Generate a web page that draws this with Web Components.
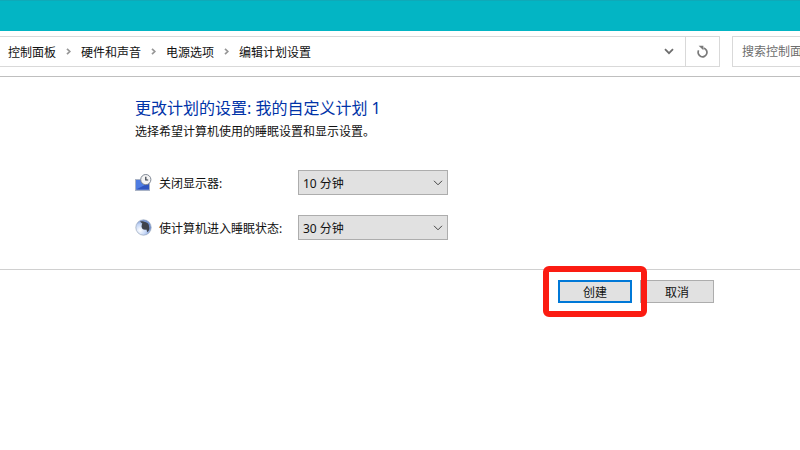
<!DOCTYPE html>
<html lang="zh-CN">
<head>
<meta charset="utf-8">
<title>编辑计划设置</title>
<style>
  html, body { margin: 0; padding: 0; background: #fff; }
  body {
    width: 800px;
    height: 450px;
    overflow: hidden;
    font-family: "Noto Sans", "Noto Sans CJK SC", sans-serif;
    color: #111;
  }
</style>
</head>
<body>
  <title-strip></title-strip>
  <address-bar>
    <crumb-item>控制面板</crumb-item>
    <crumb-item>硬件和声音</crumb-item>
    <crumb-item>电源选项</crumb-item>
    <crumb-item last>编辑计划设置</crumb-item>
  </address-bar>
  <plan-form>
    <span slot="title">更改计划的设置: 我的自定义计划 1</span>
    <span slot="hint">选择希望计算机使用的睡眠设置和显示设置。</span>
    <setting-row icon="monitor" value="10 分钟">关闭显示器:</setting-row>
    <setting-row icon="sleep" value="30 分钟">使计算机进入睡眠状态:</setting-row>
    <plan-button slot="buttons" primary marked>创建</plan-button>
    <plan-button slot="buttons">取消</plan-button>
  </plan-form>

<script>
class TitleStrip extends HTMLElement {
  constructor() {
    super();
    this.attachShadow({ mode: 'open' });
  }
  connectedCallback() {
    this.shadowRoot.innerHTML = `
      <style>
        :host {
          display: block;
          height: 31px;
          background: #03b5c4;
          border-top: 1px solid #0fa9b8;
          box-sizing: border-box;
        }
      </style>
    `;
  }
}

class CrumbItem extends HTMLElement {
  constructor() {
    super();
    this.attachShadow({ mode: 'open' });
  }
  connectedCallback() {
    const sep = this.hasAttribute('last') ? '' : `
      <svg width="5" height="7" viewBox="0 0 5 7"><path d="M1 .8 3.8 3.5 1 6.2" fill="none" stroke="#969696" stroke-width="1.7"/></svg>`;
    this.shadowRoot.innerHTML = `
      <style>
        :host { display: inline-flex; align-items: center; gap: 10px; font-size: 12px; color: #111; }
      </style>
      <slot></slot>${sep}
    `;
  }
}

class AddressBar extends HTMLElement {
  constructor() {
    super();
    this.attachShadow({ mode: 'open' });
  }
  connectedCallback() {
    this.shadowRoot.innerHTML = `
      <style>
        :host {
          display: flex;
          height: 46px;
          box-sizing: border-box;
          padding-top: 5px;
          border-bottom: 1px solid #bfbfbf;
        }
        .path {
          width: 720px;
          height: 31px;
          box-sizing: border-box;
          flex: none;
          display: flex;
          border: 1px solid #d9d9d9;
          border-left: 0;
        }
        .crumbs { flex: 1; display: flex; align-items: center; gap: 10px; padding-left: 8px; }
        .btn { display: flex; align-items: center; justify-content: center; }
        .drop { width: 32px; }
        .refresh { width: 33px; border-left: 1px solid #d9d9d9; }
        .search {
          margin-left: 12px;
          flex: 1;
          height: 31px;
          box-sizing: border-box;
          border: 1px solid #d9d9d9;
          border-right: 0;
          padding-left: 9px;
          font-size: 12px;
          line-height: 29px;
          color: #6d6d6d;
          white-space: nowrap;
          overflow: hidden;
        }
      </style>
      <div class="path">
        <div class="crumbs"><slot></slot></div>
        <div class="btn drop">
          <svg width="10" height="7" viewBox="0 0 10 7"><path d="M1 1.2 5 5.2 9 1.2" fill="none" stroke="#6e6e6e" stroke-width="1.8"/></svg>
        </div>
        <div class="btn refresh">
          <svg width="11" height="13" viewBox="0 0 11 13"><path d="M6.6 3.1A4.4 4.4 0 1 1 1.6 5.4" fill="none" stroke="#7a7a7a" stroke-width="1.7"/><path d="M1.6 .7H6.4V5.2Z" fill="#7a7a7a"/></svg>
        </div>
      </div>
      <div class="search">搜索控制面板</div>
    `;
  }
}

const ICONS = {
  monitor: `
    <svg width="17" height="17" viewBox="0 0 17 17">
      <rect x="0" y="5" width="15" height="12" fill="#a9b3c6"/>
      <rect x="1" y="6" width="13" height="9.5" fill="#4f7de2"/>
      <path d="M1 15.5 14 9V15.5Z" fill="#2f55c0"/>
      <circle cx="10.8" cy="5.6" r="5.1" fill="#f4f4f4" stroke="#7f8794"/>
      <path d="M10.8 2.8V6H13.2" fill="none" stroke="#333a46" stroke-width="1.2"/>
    </svg>`,
  sleep: `
    <svg width="17" height="17" viewBox="0 0 17 17">
      <defs>
        <radialGradient id="orb" cx="28%" cy="68%" r="70%">
          <stop offset="0" stop-color="#ffffff"/>
          <stop offset=".55" stop-color="#c4d6f6"/>
          <stop offset="1" stop-color="#6f8fd0"/>
        </radialGradient>
      </defs>
      <circle cx="8.5" cy="8.5" r="7.7" fill="url(#orb)" stroke="#9aa7bc" stroke-width=".7"/>
      <path d="M5 2.4C9 1.6 14.6 4 14.4 9.6 14.3 11.4 13.4 12.6 12.2 13.2 11.8 9.4 9.6 6 5 2.4Z" fill="#3f434b"/>
      <circle cx="10.2" cy="7.2" r="3.6" fill="#3f434b"/>
    </svg>`
};

class SettingRow extends HTMLElement {
  constructor() {
    super();
    this.attachShadow({ mode: 'open' });
  }
  connectedCallback() {
    const icon = ICONS[this.getAttribute('icon')];
    const value = this.getAttribute('value');
    this.shadowRoot.innerHTML = `
      <style>
        :host {
          display: grid;
          grid-template-columns: 24px 139px 150px;
          align-items: center;
          font-size: 12px;
          color: #111;
        }
        .icon { display: flex; }
        .select {
          height: 25px;
          box-sizing: border-box;
          background: #e1e1e1;
          border: 1px solid #adadad;
          display: flex;
          align-items: center;
          justify-content: space-between;
          padding: 0 4px;
        }
        .chev { display: flex; }
      </style>
      <div class="icon">${icon}</div>
      <div class="label"><slot></slot></div>
      <div class="select">
        <span>${value}</span>
        <span class="chev"><svg width="10" height="6" viewBox="0 0 10 6"><path d="M1 .8 5 4.8 9 .8" fill="none" stroke="#444" stroke-width="1"/></svg></span>
      </div>
    `;
  }
}

class PlanButton extends HTMLElement {
  constructor() {
    super();
    this.attachShadow({ mode: 'open' });
  }
  connectedCallback() {
    this.shadowRoot.innerHTML = `
      <style>
        :host {
          display: block;
          position: relative;
          width: 74px;
          height: 23px;
          font-size: 12px;
        }
        :host([primary]) .face { border: 2px solid #0078d7; }
        :host(:not([primary])) { margin-left: 8px; }
        .face {
          height: 100%;
          box-sizing: border-box;
          background: #e1e1e1;
          border: 1px solid #adadad;
          display: flex;
          align-items: center;
          justify-content: center;
          color: #111;
        }
        .mark {
          display: none;
          position: absolute;
          left: -15px;
          top: -14px;
          width: 104px;
          height: 51px;
          box-sizing: border-box;
          border: 6px solid #fb1c12;
          border-radius: 6px;
          z-index: 2;
        }
        :host([marked]) .mark { display: block; }
      </style>
      <div class="face"><slot></slot></div>
      <div class="mark"></div>
    `;
  }
}

class PlanForm extends HTMLElement {
  constructor() {
    super();
    this.attachShadow({ mode: 'open' });
  }
  connectedCallback() {
    this.shadowRoot.innerHTML = `
      <style>
        :host { display: block; }
        .head { padding: 20px 0 0 135px; }
        .title { font-size: 16px; line-height: 22px; color: #0033a8; }
        .hint { font-size: 12px; line-height: 18px; margin-top: 4px; color: #111; }
        .rows { display: grid; row-gap: 20px; padding: 29px 0 0 135px; }
        hr { margin: 29px 0 0; border: 0; border-top: 1px solid #d0d0d0; }
        .buttons { display: flex; padding: 10px 0 0 558px; }
      </style>
      <div class="head">
        <div class="title"><slot name="title"></slot></div>
        <div class="hint"><slot name="hint"></slot></div>
      </div>
      <div class="rows"><slot></slot></div>
      <hr>
      <div class="buttons"><slot name="buttons"></slot></div>
    `;
  }
}

customElements.define('title-strip', TitleStrip);
customElements.define('crumb-item', CrumbItem);
customElements.define('address-bar', AddressBar);
customElements.define('setting-row', SettingRow);
customElements.define('plan-button', PlanButton);
customElements.define('plan-form', PlanForm);
</script>
</body>
</html>
